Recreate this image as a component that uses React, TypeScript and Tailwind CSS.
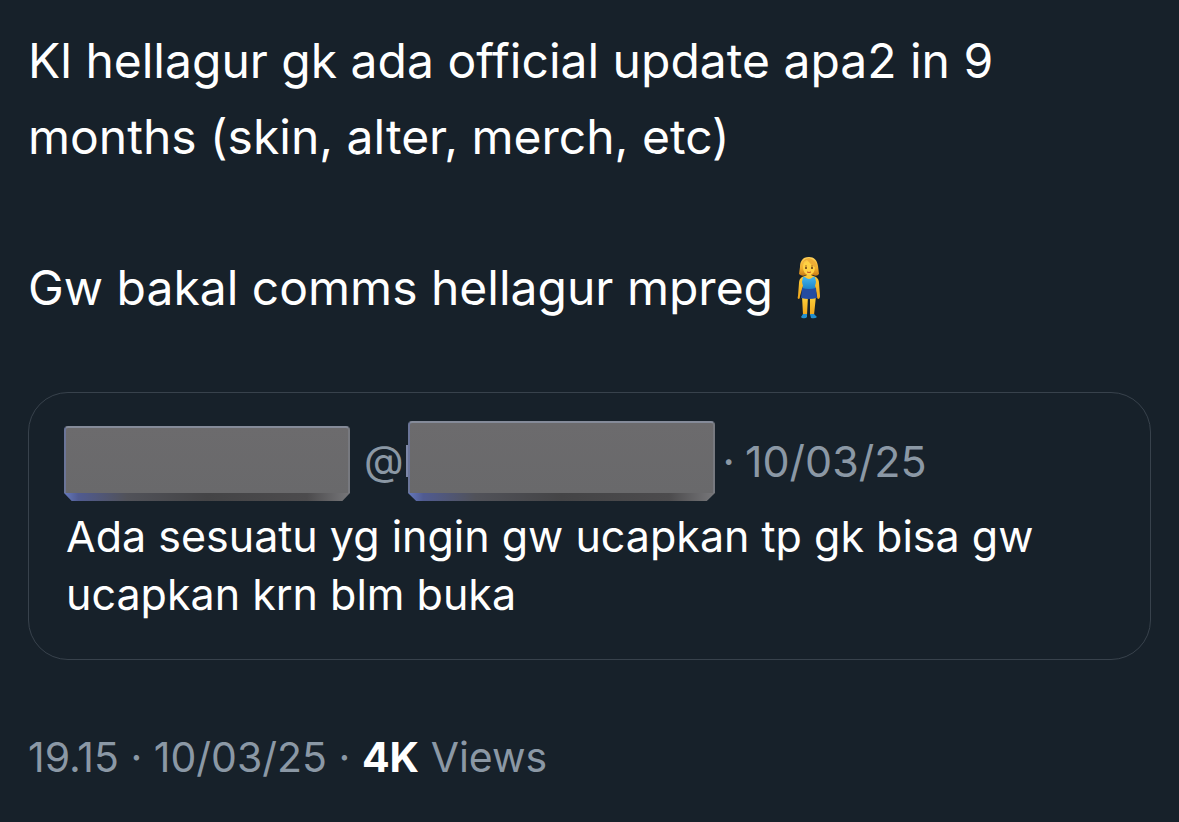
type RedactedProps = { id: string; className: string };

function Redacted({ id, className }: RedactedProps) {
  return (
    <span className={`flex flex-col overflow-hidden ${className}`} aria-hidden="true">
      <span className="min-h-0 flex-1 rounded-t border-x-2 border-t-2 border-t-[#858b99] border-r-[#77797f] border-l-[#6b7598] bg-linear-to-b from-[#6c6b6d] to-[#69696b]" />
      <svg className="block h-2 w-full" viewBox="0 0 300 8" preserveAspectRatio="none">
        <defs>
          <linearGradient id={id}>
            <stop offset="0" stopColor="#6579bd" />
            <stop offset=".05" stopColor="#505b91" />
            <stop offset=".22" stopColor="#515259" />
            <stop offset=".5" stopColor="#444446" />
            <stop offset=".85" stopColor="#4c4b4d" />
            <stop offset="1" stopColor="#77777a" />
          </linearGradient>
        </defs>
        <path d="M0 0H300L292 8H8Z" fill={`url(#${id})`} />
      </svg>
    </span>
  );
}

function StandingWoman() {
  return (
    <svg className="h-[62px] w-6 shrink-0" viewBox="0 0 24 62" role="img" aria-label="Woman standing">
      <defs>
        <linearGradient id="hair" x2="0" y2="1">
          <stop stopColor="#ffd45c" />
          <stop offset=".6" stopColor="#f0ad2c" />
          <stop offset="1" stopColor="#c97c16" />
        </linearGradient>
        <linearGradient id="skin" x2="0" y2="1">
          <stop stopColor="#ffd23c" />
          <stop offset="1" stopColor="#efa51c" />
        </linearGradient>
        <linearGradient id="top" x2="0" y2="1">
          <stop stopColor="#45b5ec" />
          <stop offset="1" stopColor="#167cc4" />
        </linearGradient>
      </defs>
      <path d="M12 0C5 0 3 5 3 10L2 17Q5 20 9 18H16Q20 20 22 17L21 9C20 3 17 0 12 0Z" fill="url(#hair)" />
      <path d="M10 15H14V18Q16 19 19 20Q22 22 22 26L23 39Q23 42 21 42Q20 42 20 39L18 29H6L3 39Q3 42 2 42Q0 42 1 39L2 26Q2 22 5 20Q8 19 10 18Z" fill="url(#skin)" />
      <path d="M5 39H11L10 58H6ZM13 39H19L17 58H13Z" fill="url(#skin)" />
      <path d="M6 20H8Q12 24 16 20H18L19 25L18 29L19 34H5L6 29L5 25Z" fill="url(#top)" />
      <path d="M5 31Q12 33 19 31L20 41Q12 43 4 41Z" fill="#244ca0" />
      <path d="M6 57H10V60Q9 62 5 61L4 60ZM13 57H17L20 60Q18 62 14 61Z" fill="#248fce" />
      <path d="M6 10Q6 4 12 4Q18 4 18 10Q18 17 12 18Q6 17 6 10Z" fill="#ffd143" />
      <path d="M4 12Q5 4 10 3Q14 8 20 12Q20 3 12 1Q4 2 4 12Z" fill="#eead35" />
      <path d="M8 9H10M14 9H16" stroke="#a66a1c" />
      <circle cx="9" cy="11" r="1" fill="#5c3517" />
      <circle cx="15" cy="11" r="1" fill="#5c3517" />
      <path d="M10 15Q12 16 14 15" fill="none" stroke="#c24b24" />
    </svg>
  );
}

export default function App() {
  return (
    <main className="min-h-screen bg-[#17212a] px-7 pt-[23px] pb-8 font-['Inter',sans-serif] text-white">
      <article>
        <p className="text-[48px] leading-[76px]">
          Kl hellagur gk ada official update apa2 in 9<br />months (skin, alter, merch, etc)
        </p>
        <p className="mt-[75px] flex items-center gap-6 text-[48px] leading-[76px]">
          Gw bakal comms hellagur mpreg
          <StandingWoman />
        </p>

        <blockquote className="mt-[66px] rounded-[40px] border border-[#38424c] px-[35px] pt-7 pb-9">
          <header className="flex h-20 items-center text-[43px] text-[#8b98a5]">
            <Redacted id="name-edge" className="mt-1 h-[75px] w-[286px]" />
            <span className="ml-3.5 text-[41px]">@</span>
            <span className="ml-0.5 h-8 w-0.5 bg-[#7c87a8]" />
            <Redacted id="handle-edge" className="h-20 w-[307px]" />
            <span className="ml-2">·</span>
            <time className="ml-2.5">10/03/25</time>
          </header>
          <p className="mt-1.5 pl-0.5 text-[43px] leading-[58px]">
            Ada sesuatu yg ingin gw ucapkan tp gk bisa gw<br />ucapkan krn blm buka
          </p>
        </blockquote>

        <footer className="mt-[68px] text-[41px] leading-[58px] text-[#8b98a5]">
          <time>19.15 · 10/03/25</time> · <b className="font-bold text-white">4K</b> Views
        </footer>
      </article>
    </main>
  );
}
